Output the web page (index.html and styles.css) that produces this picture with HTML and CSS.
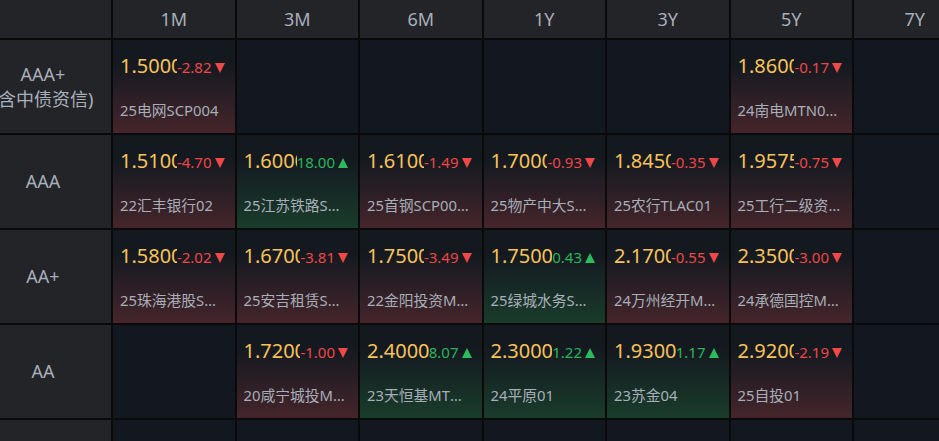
FILE: index.html
```html
<!DOCTYPE html>
<html>
    <head>
        <title>信用债收益率矩阵</title>
        <link rel="stylesheet" href="styles.css">
    </head>
    <body>
        <div id="matrix">
            <div class="head corner"></div>
            <div class="head">1M</div>
            <div class="head">3M</div>
            <div class="head">6M</div>
            <div class="head">1Y</div>
            <div class="head">3Y</div>
            <div class="head">5Y</div>
            <div class="head">7Y</div>

            <!-- AAA+ -->
            <div class="rating">AAA+<br>(含中债资信)</div>
            <div class="cell down">
                <div class="quote"><span class="yield">1.5000</span><span class="chg">-2.82<i class="tri"></i></span></div>
                <div class="bond">25电网SCP004</div>
            </div>
            <div class="cell"></div>
            <div class="cell"></div>
            <div class="cell"></div>
            <div class="cell"></div>
            <div class="cell down">
                <div class="quote"><span class="yield">1.8600</span><span class="chg">-0.17<i class="tri"></i></span></div>
                <div class="bond">24南电MTN001(绿色)</div>
            </div>
            <div class="cell"></div>

            <!-- AAA -->
            <div class="rating">AAA</div>
            <div class="cell down">
                <div class="quote"><span class="yield">1.5100</span><span class="chg">-4.70<i class="tri"></i></span></div>
                <div class="bond">22汇丰银行02</div>
            </div>
            <div class="cell up">
                <div class="quote"><span class="yield">1.6000</span><span class="chg">18.00<i class="tri"></i></span></div>
                <div class="bond">25江苏铁路SCP001</div>
            </div>
            <div class="cell down">
                <div class="quote"><span class="yield">1.6100</span><span class="chg">-1.49<i class="tri"></i></span></div>
                <div class="bond">25首钢SCP003(科创票据)</div>
            </div>
            <div class="cell down">
                <div class="quote"><span class="yield">1.7000</span><span class="chg">-0.93<i class="tri"></i></span></div>
                <div class="bond">25物产中大SCP005</div>
            </div>
            <div class="cell down">
                <div class="quote"><span class="yield">1.8450</span><span class="chg">-0.35<i class="tri"></i></span></div>
                <div class="bond">25农行TLAC01</div>
            </div>
            <div class="cell down">
                <div class="quote"><span class="yield">1.9575</span><span class="chg">-0.75<i class="tri"></i></span></div>
                <div class="bond">25工行二级资本债01</div>
            </div>
            <div class="cell"></div>

            <!-- AA+ -->
            <div class="rating">AA+</div>
            <div class="cell down">
                <div class="quote"><span class="yield">1.5800</span><span class="chg">-2.02<i class="tri"></i></span></div>
                <div class="bond">25珠海港股SCP001</div>
            </div>
            <div class="cell down">
                <div class="quote"><span class="yield">1.6700</span><span class="chg">-3.81<i class="tri"></i></span></div>
                <div class="bond">25安吉租赁SCP001</div>
            </div>
            <div class="cell down">
                <div class="quote"><span class="yield">1.7500</span><span class="chg">-3.49<i class="tri"></i></span></div>
                <div class="bond">22金阳投资MTN001</div>
            </div>
            <div class="cell up">
                <div class="quote"><span class="yield">1.7500</span><span class="chg">0.43<i class="tri"></i></span></div>
                <div class="bond">25绿城水务SCP001</div>
            </div>
            <div class="cell down">
                <div class="quote"><span class="yield">2.1700</span><span class="chg">-0.55<i class="tri"></i></span></div>
                <div class="bond">24万州经开MTN001</div>
            </div>
            <div class="cell down">
                <div class="quote"><span class="yield">2.3500</span><span class="chg">-3.00<i class="tri"></i></span></div>
                <div class="bond">24承德国控MTN001</div>
            </div>
            <div class="cell"></div>

            <!-- AA -->
            <div class="rating">AA</div>
            <div class="cell"></div>
            <div class="cell down">
                <div class="quote"><span class="yield">1.7200</span><span class="chg">-1.00<i class="tri"></i></span></div>
                <div class="bond">20咸宁城投MTN001</div>
            </div>
            <div class="cell up">
                <div class="quote"><span class="yield">2.4000</span><span class="chg">8.07<i class="tri"></i></span></div>
                <div class="bond">23天恒基MTN001</div>
            </div>
            <div class="cell up">
                <div class="quote"><span class="yield">2.3000</span><span class="chg">1.22<i class="tri"></i></span></div>
                <div class="bond">24平原01</div>
            </div>
            <div class="cell up">
                <div class="quote"><span class="yield">1.9300</span><span class="chg">1.17<i class="tri"></i></span></div>
                <div class="bond">23苏金04</div>
            </div>
            <div class="cell down">
                <div class="quote"><span class="yield">2.9200</span><span class="chg">-2.19<i class="tri"></i></span></div>
                <div class="bond">25自投01</div>
            </div>
            <div class="cell"></div>

            <!-- AA- -->
            <div class="rating">AA-</div>
            <div class="cell"></div>
            <div class="cell"></div>
            <div class="cell"></div>
            <div class="cell"></div>
            <div class="cell"></div>
            <div class="cell"></div>
            <div class="cell"></div>
        </div>
    </body>
</html>
```

FILE: styles.css
```css
html, body {
    margin: 0px;
    height: 100%;
    overflow: hidden;
    background: #0a0a0b;
}
#matrix {
    display: grid;
    grid-template-columns: 111px repeat(7, 121.5px);
    grid-template-rows: 38px repeat(5, 93px);
    gap: 2px;
    font-family: "Noto Sans", "Noto Sans CJK SC", sans-serif;
}
.head {
    background: #232428;
    color: #a8afba;
    font-size: 18px;
    display: flex;
    align-items: center;
    justify-content: center;
}
.rating {
    background: #232428;
    color: #a8afba;
    font-size: 18px;
    line-height: 25px;
    display: flex;
    align-items: center;
    justify-content: center;
    text-align: center;
    white-space: nowrap;
    padding-right: 25px;
}
.cell {
    background: #131820;
    padding: 12px 10px 0px 7px;
    min-width: 0;
}
.cell.down {
    background: linear-gradient(#141920 25%, #45252b);
}
.cell.up {
    background: linear-gradient(#141920 25%, #193c2b);
}
.quote {
    display: flex;
    align-items: baseline;
    height: 26px;
}
.yield {
    flex: 1;
    min-width: 0;
    overflow: hidden;
    white-space: nowrap;
    color: #f8c25a;
    font-size: 20px;
}
.chg {
    flex: none;
    font-size: 15px;
    white-space: nowrap;
}
.down .chg {
    color: #ef4646;
}
.up .chg {
    color: #2ab45a;
}
.tri {
    display: inline-block;
    width: 0px;
    height: 0px;
    margin-left: 3px;
    border-left: 5px solid transparent;
    border-right: 5px solid transparent;
}
.down .tri {
    border-top: 10px solid #f04747;
}
.up .tri {
    border-bottom: 10px solid #2bbd5c;
}
.bond {
    margin-top: 21px;
    color: #a7aeb8;
    font-size: 14.8px;
    white-space: nowrap;
    overflow: hidden;
    text-overflow: ellipsis;
}
```
